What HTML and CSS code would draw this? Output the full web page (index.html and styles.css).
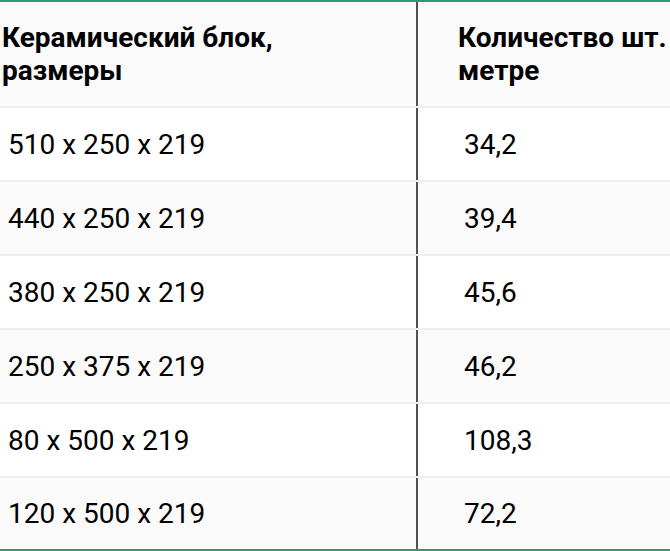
FILE: index.html
```html
<!DOCTYPE html>
<html lang="ru">
<head>
<meta charset="utf-8">
<link rel="stylesheet" href="styles.css">
</head>
<body>
<div class="table">
  <div class="row head">
    <div class="cell c1">Керамический блок,<br>размеры</div>
    <div class="cell c2">Количество шт.<br>метре</div>
  </div>
  <div class="row odd"><div class="cell c1 b">510 x 250 x 219</div><div class="cell c2 b">34,2</div></div>
  <div class="row even"><div class="cell c1 b">440 x 250 x 219</div><div class="cell c2 b">39,4</div></div>
  <div class="row odd"><div class="cell c1 b">380 x 250 x 219</div><div class="cell c2 b">45,6</div></div>
  <div class="row even"><div class="cell c1 b">250 x 375 x 219</div><div class="cell c2 b">46,2</div></div>
  <div class="row odd"><div class="cell c1 b">80 x 500 x 219</div><div class="cell c2 b">108,3</div></div>
  <div class="row even last"><div class="cell c1 b">120 x 500 x 219</div><div class="cell c2 b">72,2</div></div>
</div>
</body>
</html>
```
FILE: styles.css
```css
html, body {
  margin: 0;
  padding: 0;
  background: #ffffff;
}
body {
  font-family: Roboto, "Liberation Sans", sans-serif;
  color: #000000;
}
.table {
  width: 670px;
  border-top: 2px solid #26a072;
  border-bottom: 2px solid #26a072;
}
.row {
  display: flex;
  height: 72px;
  border-bottom: 2px solid #eeeeee;
}
.row.last {
  height: 71px;
  border-bottom: none;
}
.row.head {
  height: 104px;
  background: #fafafa;
}
.row.odd {
  background: #ffffff;
}
.row.even {
  background: #fafafa;
}
.cell {
  display: flex;
  align-items: center;
  white-space: nowrap;
}
.c1 {
  width: 418px;
  padding-left: 2px;
  box-sizing: border-box;
  border-right: 2px solid #505050;
  flex: none;
}
.c2 {
  padding-left: 40px;
}
.head .cell {
  font-weight: 700;
  font-size: 28px;
  line-height: 33px;
}
.b {
  font-size: 28px;
}
.c1.b {
  padding-left: 8px;
}
.c2.b {
  padding-left: 46px;
}
```
